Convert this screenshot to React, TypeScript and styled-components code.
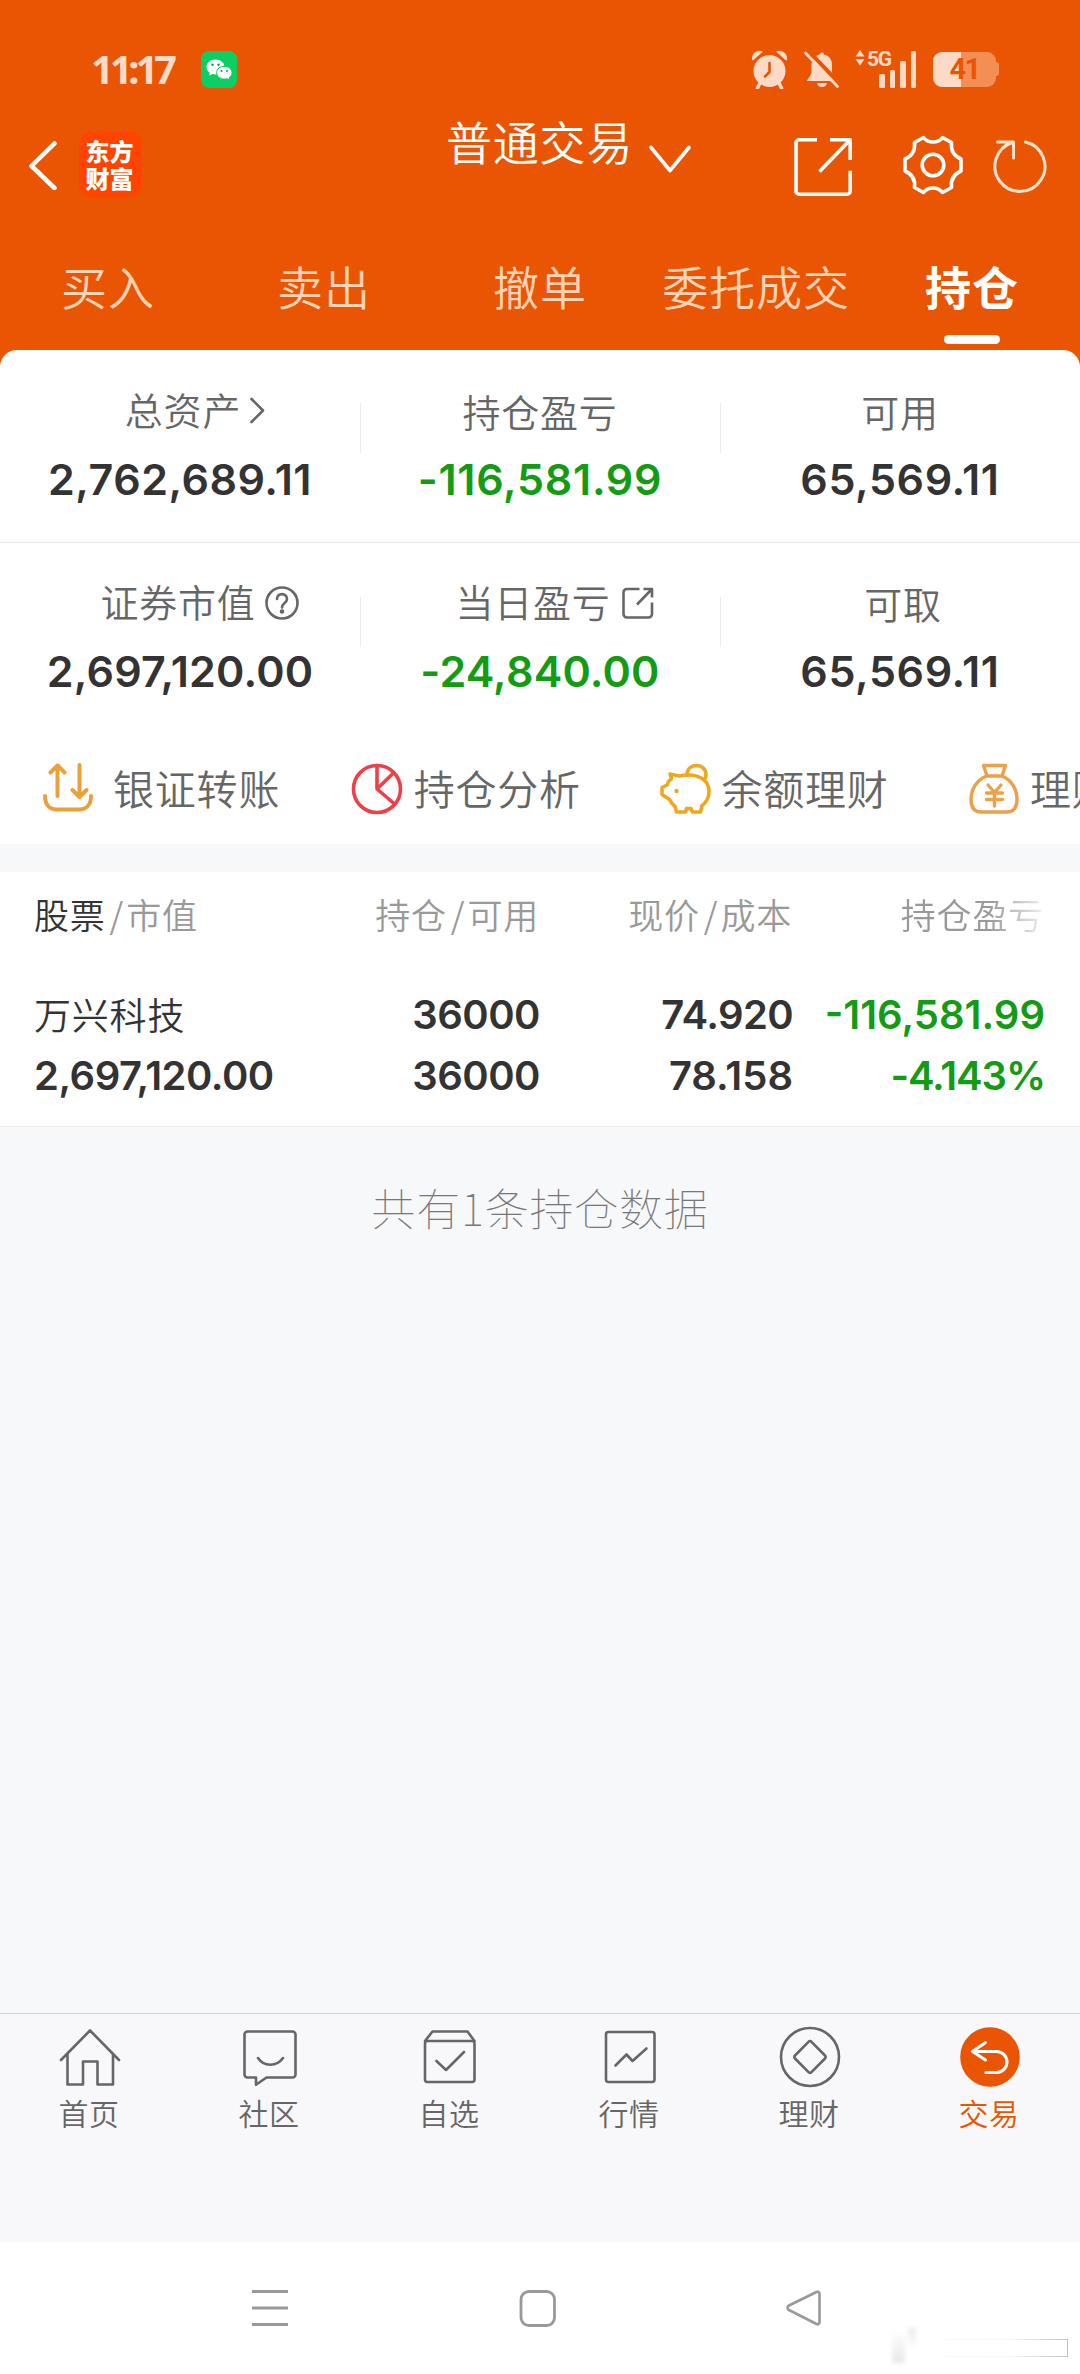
import React from 'react';
import styled, { createGlobalStyle, css } from 'styled-components';

const ORANGE = '#ea5504';
const PALE = '#fcdac6';
const GREEN = '#149b14';
const INK = '#333333';
const GREY = '#666666';
const CJK = `'Noto Sans CJK SC', sans-serif`;
const NUM = `Inter, 'Noto Sans CJK SC', sans-serif`;

const GlobalStyle = createGlobalStyle`
  * { box-sizing: border-box; }
  html, body { margin: 0; padding: 0; }
  body { background: #f7f8fa; font-family: ${CJK}; }
`;

const Screen = styled.div`
  width: 1080px;
  height: 2374px;
  overflow: hidden;
  display: flex;
  flex-direction: column;
  background: #f7f8fa;
`;

const Header = styled.header`
  height: 350px;
  flex: none;
  display: flex;
  flex-direction: column;
  background: ${ORANGE};
`;

const StatusBar = styled.div`
  height: 120px;
  padding: 18px 81px 0 91px;
  display: flex;
  align-items: center;
  color: ${PALE};
`;

const Clock = styled.span`
  width: 110px;
  font: 700 40px/40px 'Noto Sans', sans-serif;
  letter-spacing: -4.2px;
`;

const StatusIcons = styled.div`
  margin-left: auto;
  display: flex;
  align-items: center;
`;

const Network = styled.div`
  display: flex;
  width: 62px;
  height: 38px;
  margin: 0 16px 0 15px;
`;

const NetworkLabel = styled.span`
  width: 24px;
  margin-left: 2px;
  font: 700 21px/18px Roboto, sans-serif;
  letter-spacing: -1.4px;
`;

const Bars = styled.div`
  display: flex;
  align-items: flex-end;
  gap: 5px;
  margin-left: -12px;
`;

const Bar = styled.i<{ $h: number }>`
  width: 5.5px;
  height: ${(p) => p.$h}px;
  border-radius: 1.5px;
  background: ${PALE};
`;

const Battery = styled.div`
  display: flex;
  align-items: center;
`;

const BatteryBody = styled.div`
  width: 63px;
  height: 35px;
  border-radius: 9px;
  display: flex;
  align-items: center;
  justify-content: center;
  background: linear-gradient(90deg, ${PALE} 44%, #f38e55 44%);
  color: ${ORANGE};
  font: 700 29px/35px Roboto, sans-serif;
  letter-spacing: -1.6px;
`;

const BatteryTip = styled.i`
  width: 3px;
  height: 14px;
  border-radius: 0 3px 3px 0;
  background: #f38e55;
`;

const TitleBar = styled.div`
  height: 100px;
  display: flex;
  align-items: flex-start;
  padding: 0 32px 0 28px;
`;

const BackGroup = styled.div`
  width: 418px;
  padding-top: 12px;
  display: flex;
  align-items: center;
  gap: 21px;
`;

const Logo = styled.div`
  width: 63px;
  height: 65px;
  padding: 0 2px 2px 0;
  border-radius: 12px;
  background: #ff4400;
  color: #fff;
  display: flex;
  align-items: center;
  justify-content: center;
  text-align: center;
  font: 900 24px/27px ${CJK};
`;

const Title = styled.h1`
  margin: -3px 0 0;
  width: 188px;
  font: 350 46px/46px ${CJK};
  letter-spacing: 0.8px;
  color: #fff;
  white-space: nowrap;
`;

const Actions = styled.div`
  margin: 13px 0 0 auto;
  display: flex;
  align-items: center;
`;

const ActionGap = styled.i<{ $w: number }>`
  width: ${(p) => p.$w}px;
`;

const Tabs = styled.nav`
  flex: 1;
  display: grid;
  grid-template-columns: repeat(5, 216px);
`;

const Tab = styled.div<{ $active?: boolean }>`
  display: flex;
  flex-direction: column;
  align-items: center;
  padding-top: 40px;
  font: ${(p) => (p.$active ? 700 : 350)} 46px/50px ${CJK};
  letter-spacing: 0.9px;
  white-space: nowrap;
  color: ${(p) => (p.$active ? '#fff' : '#fdd3b8')};
  ${(p) =>
    p.$active &&
    css`
      &::after {
        content: '';
        width: 56px;
        height: 9px;
        margin-top: 25px;
        border-radius: 5px;
        background: #fff;
      }
    `}
`;

const CardBack = styled.section`
  flex: none;
  background: ${ORANGE};
`;

const Card = styled.div`
  height: 494px;
  border-radius: 17px 17px 0 0;
  background: #fff;
  display: flex;
  flex-direction: column;
`;

const StatRow = styled.div<{ $h: number; $line?: boolean }>`
  height: ${(p) => p.$h}px;
  display: grid;
  grid-template-columns: repeat(3, 360px);
  border-bottom: ${(p) => (p.$line ? '1px solid #e8e8e8' : 'none')};
`;

const Stat = styled.div<{ $top: number; $tick: number }>`
  display: flex;
  flex-direction: column;
  align-items: center;
  padding-top: ${(p) => p.$top}px;
  background: linear-gradient(#ececec, #ececec) no-repeat 0 ${(p) => p.$tick}px / 1px 50px;
  &:first-child { background: none; }
`;

const StatLabel = styled.div<{ $drop?: number; $shift?: number }>`
  height: 50px;
  display: flex;
  align-items: center;
  padding-top: ${(p) => (p.$drop || 0) * 2}px;
  padding-left: ${(p) => (p.$shift || 0)}px;
  font: 350 38px/44px ${CJK};
  letter-spacing: 0.8px;
  color: ${GREY};
  svg { margin-top: 4px; }
`;

const StatValue = styled.div<{ $down?: boolean; $track?: number }>`
  margin-top: 19px;
  font: 600 43px/52px ${NUM};
  letter-spacing: ${(p) => p.$track ?? 0.2}px;
  color: ${(p) => (p.$down ? GREEN : INK)};
  font-optical-sizing: none;
`;

const Links = styled.div`
  flex: 1;
  display: flex;
  align-items: flex-start;
  padding: 24px 0 0 42px;
  overflow: hidden;
`;

const QuickLink = styled.div<{ $gap: number }>`
  flex: none;
  width: 308.7px;
  display: flex;
  align-items: center;
  gap: ${(p) => p.$gap}px;
`;

const QuickText = styled.span`
  margin-top: -4px;
  font: 350 41px/48px ${CJK};
  letter-spacing: 0.8px;
  color: ${GREY};
  white-space: nowrap;
`;

const Holdings = styled.section`
  flex: none;
  margin-top: 28px;
  height: 255px;
  padding: 17px 36px 0 34px;
  background: #fff;
  border-bottom: 1px solid #ececec;
`;

const Row = styled.div<{ $h: number; $space?: number }>`
  height: ${(p) => p.$h}px;
  margin-bottom: ${(p) => p.$space || 0}px;
  display: grid;
  grid-template-columns: 250px 255px 253px 252px;
  align-items: center;
`;

const HeadCell = styled.div<{ $left?: boolean; $fade?: boolean }>`
  text-align: ${(p) => (p.$left ? 'left' : 'right')};
  font: 350 35px/50px ${CJK};
  letter-spacing: 0.8px;
  white-space: nowrap;
  color: #999;
  ${(p) =>
    p.$fade &&
    css`
      mask-image: linear-gradient(90deg, #000 78%, rgba(0, 0, 0, 0.15) 100%);
    `}
`;

const Strong = styled.span`
  color: ${INK};
`;

const Slash = styled.span`
  margin: 0 2px 0 4px;
`;

const StockName = styled.div`
  margin-top: -2px;
  font: 350 37px/50px ${CJK};
  letter-spacing: 0.8px;
  color: ${INK};
`;

const Cell = styled.div<{ $left?: boolean; $down?: boolean; $track?: number }>`
  margin-right: -1px;
  text-align: ${(p) => (p.$left ? 'left' : 'right')};
  font: 600 40px/50px ${NUM};
  letter-spacing: ${(p) => p.$track ?? -0.5}px;
  white-space: nowrap;
  color: ${(p) => (p.$down ? GREEN : INK)};
  font-optical-sizing: none;
`;

const Empty = styled.main`
  flex: 1;
  padding-top: 54px;
  text-align: center;
  font: 100 44px/52px ${CJK};
  letter-spacing: 0.8px;
  color: #777;
`;

const BottomNav = styled.nav`
  flex: none;
  height: 229px;
  border-top: 1px solid #d3d5d8;
  background: #f8f8fa;
  display: grid;
  grid-template-columns: repeat(6, 180px);
`;

const NavItem = styled.div<{ $active?: boolean }>`
  display: flex;
  flex-direction: column;
  align-items: center;
  padding-top: 12px;
  gap: 1px;
  font: 350 30px/46px ${CJK};
  letter-spacing: 0.6px;
  color: ${(p) => (p.$active ? ORANGE : GREY)};
`;

const NavText = styled.span`
  margin-left: -2px;
`;

const SystemBar = styled.footer`
  flex: none;
  height: 132px;
  padding-left: 252px;
  display: flex;
  align-items: center;
  background: #fff;
  position: relative;
`;

const SystemSlot = styled.div`
  width: 267px;
  display: flex;
`;

const Smudge = styled.div`
  position: absolute;
  right: 12px;
  bottom: 10px;
  width: 176px;
  height: 36px;
  display: flex;
`;

const SmudgeBlock = styled.i<{ $w: number; $up?: boolean }>`
  width: ${(p) => p.$w}px;
  height: ${(p) => (p.$up ? 18 : 30)}px;
  margin: ${(p) => (p.$up ? '0 0 0 3px' : '5px 0 0')};
  filter: blur(2px);
  background: linear-gradient(${(p) => (p.$up ? '#ebebeb, #fafafa' : '#fdfdfd, #e8e8e8')});
`;

const SmudgeBox = styled.i`
  flex: 1;
  margin: 11px 0 7px 8px;
  border: 1.5px solid;
  border-image: linear-gradient(90deg, #fdfdfd, #f4f4f4 60%, #c0c0c0) 1;
  border-left: none;
  filter: blur(0.6px);
`;

const Svg = ({ w, h, sw = 2.5, color = 'currentColor', children }: {
  w: number; h: number; sw?: number; color?: string; children: React.ReactNode;
}) => (
  <svg width={w} height={h} viewBox={`0 0 ${w} ${h}`} fill="none" stroke={color}
    strokeWidth={sw} strokeLinecap="round" strokeLinejoin="round">
    {children}
  </svg>
);

const WeChat = () => (
  <Svg w={36} h={37} sw={0}>
    <rect width="36" height="37" rx="8" fill="#0bcf63" />
    <path d="M14.500 8.500c-5 0-9 3.300-9 7.500 0 2.300 1.200 4.300 3.200 5.700l-.5 2.800 3.200-1.600c1 .3 2 .5 3.100.5 5 0 9-3.300 9-7.400s-4-7.500-9-7.500z" fill="#fff" />
    <path d="M23.300 15.200c4.300 0 7.700 2.900 7.700 6.500 0 2-1 3.700-2.700 4.900l.4 2.500-2.700-1.400c-.9.300-1.700.4-2.700.4-4.300 0-7.700-2.800-7.700-6.400s3.400-6.500 7.700-6.500z" fill="#fff" stroke="#0bcf63" strokeWidth="1" />
    <g fill="#0b9f50">
      <circle cx="11.500" cy="13.700" r="1.200" /><circle cx="17.500" cy="13.700" r="1.200" />
      <circle cx="20.500" cy="20" r="1" /><circle cx="26" cy="20" r="1" />
    </g>
  </Svg>
);

const Alarm = () => (
  <Svg w={37} h={39} sw={0}>
    <circle cx="18.500" cy="21" r="16" fill={PALE} />
    <path d="M1 9.500C0 4 6 -1 12 1.500L2 10.500zM36 9.500C37 4 31 -1 25 1.500L35 10.500z" fill={PALE} />
    <path d="M9 33l-2.500 5M28 33l2.500 5" stroke={PALE} strokeWidth="3.500" />
    <path d="M18.500 13v9l-4.500 4.500" stroke={ORANGE} strokeWidth="2.600" />
  </Svg>
);

const BellOff = () => (
  <Svg w={37} h={39} sw={0}>
    <path d="M19 2.500c1.300 0 2 .9 2 2 5 1.200 8 5 8 10v7.500c0 3 3 5 4.500 9H4c1.800-4 4.500-6 4.500-9v-7.500c0-5 3.500-8.800 8.500-10 0-1.100.7-2 2-2z" fill={PALE} />
    <path d="M14 33h10c-.5 2.500-2.500 4-5 4s-4.500-1.500-5-4z" fill={PALE} />
    <path d="M5 0.500L38 35" stroke={ORANGE} strokeWidth="4" />
    <path d="M2.500 3L34.500 36.500" stroke={PALE} strokeWidth="2.800" />
  </Svg>
);

const IconGap = styled.i`
  width: 15px;
`;

const tabs = ['买入', '卖出', '撤单', '委托成交', '持仓'];

const linkIcons = [
  <Svg w={52} h={52} sw={4} color="#e9a13b">
    <path d="M3 33c0 9 5 13.500 12 13.500h22c7 0 12-4.500 12-13.500M15.500 33V3M8.500 9.500L15.500 2.500l7 7M37.500 2v31M30.500 27l7 7 7-7" />
  </Svg>,
  <Svg w={52} h={52} sw={3.6} color="#ec4149">
    <circle cx="26" cy="26" r="23.500" /><path d="M26 2.500V26L42.500 10M26 26l17 14.500" />
  </Svg>,
  <Svg w={52} h={52} sw={3.6} color="#efa81e">
    <path d="M28 12.500C28 6 32 2.500 37.500 2.500S47 6.500 47 11.500c0 1.500-.5 3-1 4" />
    <path d="M12.500 15.500L11 11l9.500 2c2.500-.7 6-1 9-1 12 0 20.500 6 20.500 16.500 0 6-3 11-7 14L41.500 49h-8L32 45.500h-4.500L26.500 49h-9l-1.500-5.500c-2.500-2-4-4-5.500-7L3 31.500v-7l5-2.500c.7-2.500 2.300-4.700 4.500-6.500z" />
    <circle cx="17.500" cy="28" r="2.200" fill="#efa81e" stroke="none" />
  </Svg>,
  <Svg w={52} h={52} sw={3.4} color="#eba04a">
    <path d="M15.500 2.500h22l-3.500 10.500h-15zM18.500 13C9 17 3 26 3 36.500 3 45 7 49 13.500 49h25C45 49 49 45 49 36.500 49 26 43.500 17 34 13" />
    <path d="M20 22l6.500 7.500L33 22M26.500 29.500V43M18.500 30h16M18.500 36.500h16" />
  </Svg>,
];
const links = [['银证转账', 19], ['持仓分析', 11], ['余额理财', 10], ['理财', 10]] as const;

const navItems: [string, React.ReactNode][] = [
  ['首页', <><path d="M3 34L32 4.500l29 29.500M9.500 28v30.500h15.500v-23h14.500v23H55V28" /></>],
  ['社区', <><path d="M9.500 5.500h45a3 3 0 0 1 3 3v40a3 3 0 0 1-3 3H28.500L18 58.800v-7.300H9.500a3 3 0 0 1-3-3v-40a3 3 0 0 1 3-3M20 32c6 9 18.500 9 25 0" /></>],
  ['自选', <><rect x="7" y="15" width="49.500" height="41" rx="2.500" /><path d="M7 15l7.500-9.500h35L56.500 15M18.500 35l9.500 9L46 26" /></>],
  ['行情', <><rect x="8" y="6" width="48.500" height="50" rx="2.500" /><path d="M17.500 39.500l11-11 6 6.500L48.500 22.500" /></>],
  ['理财', <><circle cx="32" cy="31" r="29" /><path d="M30.500 15.800a2 2 0 0 1 3 0L47 29.500a2 2 0 0 1 0 3L33.500 46.200a2 2 0 0 1-3 0L17 32.500a2 2 0 0 1 0-3z" /></>],
  ['交易', <><circle cx="32" cy="31" r="29.800" fill={ORANGE} stroke="none" /><path d="M27.500 16.500L14.500 25.500l13 8.500M15 25.500h23.500a10.500 10.500 0 0 1 0 21H28" stroke="#fff" strokeWidth="3" /></>],
];

export default function App() {
  return (
    <>
      <GlobalStyle />
      <Screen>
        <Header>
          <StatusBar>
            <Clock>11:17</Clock>
            <WeChat />
            <StatusIcons>
              <Alarm />
              <IconGap />
              <BellOff />
              <Network>
                <Svg w={10} h={16} sw={0}>
                  <path d="M5 0l4.500 6.500h-9zM5 15.500L.5 9h9z" fill={PALE} />
                </Svg>
                <NetworkLabel>5G</NetworkLabel>
                <Bars>
                  <Bar $h={14} /><Bar $h={18} /><Bar $h={27} /><Bar $h={37} />
                </Bars>
              </Network>
              <Battery><BatteryBody>41</BatteryBody><BatteryTip /></Battery>
            </StatusIcons>
          </StatusBar>
          <TitleBar>
            <BackGroup>
              <Svg w={30} h={50} sw={4.500} color="#fff"><path d="M26.500 3.500L3.500 26l23 22" /></Svg>
              <Logo>东方<br />财富</Logo>
            </BackGroup>
            <Title>普通交易</Title>
            <Svg w={60} h={60} sw={3.600} color="#fff"><path d="M17 27.500L36 50.500l19-23" /></Svg>
            <Actions>
              <Svg w={62} h={64} sw={3.600} color="#fff">
                <path strokeLinecap="butt" d="M25 6.800H7a3 3 0 0 0-3 3v48.400a3 3 0 0 0 3 3h48.200a3 3 0 0 0 3-3V37.700M38 6.800h20.200V27M57.500 7.500L27.500 38.500" />
              </Svg>
              <ActionGap $w={47} />
              <Svg w={64} h={64} sw={3.600} color="#fff">
                <path d="M22.500 4.500C27 10.500 37 10.500 41.500 4.500L50.500 9.500C49.500 18 53 23 60 26V38C53 41 49.500 46 50.500 54.500L41.500 59.500C37 53.500 27 53.500 22.500 59.500L13.500 54.500C14.500 46 11 41 4 38V26C11 23 14.500 18 13.500 9.500Z" />
                <circle cx="32" cy="32" r="10.800" />
              </Svg>
              <ActionGap $w={27} />
              <Svg w={56} h={60} sw={3} color="#ffe3cf">
                <path d="M33.500 7A25 25 0 1 1 20.500 7.500M5.500 7h16v16" />
              </Svg>
            </Actions>
          </TitleBar>
          <Tabs>
            {tabs.map((t, i) => <Tab key={t} $active={i === 4}>{t}</Tab>)}
          </Tabs>
        </Header>

        <CardBack>
          <Card>
            <StatRow $h={193} $line>
              <Stat $top={34} $tick={53}>
                <StatLabel $shift={32}>总资产
                  <Svg w={26} h={32} sw={2.600}><path d="M10.500 4L22 15.500L10.500 27" /></Svg>
                </StatLabel>
                <StatValue $track={0.5}>2,762,689.11</StatValue>
              </Stat>
              <Stat $top={34} $tick={53}>
                <StatLabel $drop={2}>持仓盈亏</StatLabel>
                <StatValue $down $track={0.7}>-116,581.99</StatValue>
              </Stat>
              <Stat $top={34} $tick={53}>
                <StatLabel $drop={2}>可用</StatLabel>
                <StatValue $track={0.6}>65,569.11</StatValue>
              </Stat>
            </StatRow>
            <StatRow $h={196}>
              <Stat $top={33} $tick={54}>
                <StatLabel $shift={40}>证券市值
                  <Svg w={44} h={36} sw={2.600}>
                    <circle cx="26" cy="18" r="15.500" />
                    <path d="M21 14c0-6.500 10-6.500 10 0 0 4-5 4-5 8.500" /><circle cx="26" cy="26.500" r="1" fill="currentColor" />
                  </Svg>
                </StatLabel>
                <StatValue>2,697,120.00</StatValue>
              </Stat>
              <Stat $top={33} $tick={54}>
                <StatLabel $shift={30}>当日盈亏
                  <Svg w={44} h={36} sw={2.600}>
                    <path strokeLinecap="butt" d="M28.500 4H16a3.500 3.500 0 0 0-3.500 3.500v21.500A3.500 3.500 0 0 0 16 32.500h21.500a3.500 3.500 0 0 0 3.500-3.500V17.500M32.500 4H41v8.500M40.500 4.500L26 19.500" />
                  </Svg>
                </StatLabel>
                <StatValue $down>-24,840.00</StatValue>
              </Stat>
              <Stat $top={33} $tick={54}>
                <StatLabel $drop={2} $shift={6}>可取</StatLabel>
                <StatValue $track={0.6}>65,569.11</StatValue>
              </Stat>
            </StatRow>
            <Links>
              {links.map(([t, g], i) => (
                <QuickLink key={t} $gap={g}>{linkIcons[i]}<QuickText>{t}</QuickText></QuickLink>
              ))}
            </Links>
          </Card>
        </CardBack>

        <Holdings>
          <Row $h={50} $space={45}>
            <HeadCell $left><Strong>股票</Strong><Slash>/</Slash>市值</HeadCell>
            <HeadCell>持仓<Slash>/</Slash>可用</HeadCell>
            <HeadCell>现价<Slash>/</Slash>成本</HeadCell>
            <HeadCell $fade>持仓盈亏</HeadCell>
          </Row>
          <Row $h={61}>
            <StockName>万兴科技</StockName>
            <Cell>36000</Cell>
            <Cell $track={-0.6}>74.920</Cell>
            <Cell $down $track={0}>-116,581.99</Cell>
          </Row>
          <Row $h={61}>
            <Cell $left>2,697,120.00</Cell>
            <Cell>36000</Cell>
            <Cell $track={0}>78.158</Cell>
            <Cell $down $track={-1.1}>-4.143%</Cell>
          </Row>
        </Holdings>

        <Empty>共有1条持仓数据</Empty>

        <BottomNav>
          {navItems.map(([t, icon], i) => (
            <NavItem key={t} $active={i === 5}>
              <Svg w={64} h={62} sw={2.600}>{icon}</Svg>
              <NavText>{t}</NavText>
            </NavItem>
          ))}
        </BottomNav>

        <SystemBar>
          <SystemSlot>
            <Svg w={36} h={36} sw={3} color="#999"><path strokeLinecap="butt" d="M0 1.500h36M0 18h36M0 34.500h36" /></Svg>
          </SystemSlot>
          <SystemSlot>
            <Svg w={37} h={37} sw={2.800} color="#999"><rect x="2" y="1.500" width="33.500" height="34" rx="8" /></Svg>
          </SystemSlot>
          <SystemSlot>
            <Svg w={36} h={36} sw={2.600} color="#999"><path d="M30.500 2L3 15.500a2.500 2.500 0 0 0 0 4.500L30.500 34a2 2 0 0 0 3-2V4a2 2 0 0 0-3-2z" /></Svg>
          </SystemSlot>
          <Smudge>
            <SmudgeBlock $w={13} /><SmudgeBlock $w={8} $up /><SmudgeBox />
          </Smudge>
        </SystemBar>
      </Screen>
    </>
  );
}
